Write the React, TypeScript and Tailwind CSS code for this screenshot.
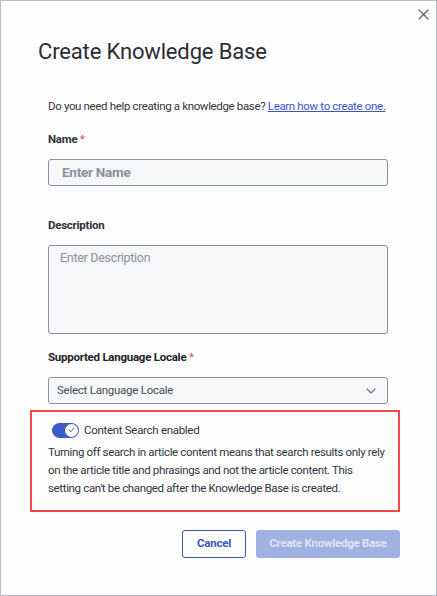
import React from "react";

export default function App() {
  const font = { fontFamily: "Roboto, 'Noto Sans', sans-serif" };
  return (
    <div
      style={font}
      className="relative w-[437px] h-[596px] bg-[#fdfdfd] border border-[#b7bbcb] text-[#2e3139] overflow-hidden"
    >
      <button className="absolute right-[7px] top-[7px] w-[12px] h-[12px] flex items-center justify-center">
        <svg width="11" height="11" viewBox="0 0 11 11" fill="none" stroke="#5f636b" strokeWidth="1.3" strokeLinecap="round">
          <path d="M1 1 L10 10 M10 1 L1 10" />
        </svg>
      </button>

      <div className="flex flex-col pl-[47px] pr-[48px]">
        <h1 className="mt-[37px] -ml-[10px] text-[22px] leading-[28px] tracking-[-0.15px] font-normal text-[#2a2d35]">
          Create Knowledge Base
        </h1>

        <p className="mt-[32px] text-[11.5px] leading-[16px] tracking-[-0.35px] text-[#33363d] whitespace-nowrap">
          Do you need help creating a knowledge base?{" "}
          <a className="text-[#3b56c6] underline">Learn how to create one.</a>
        </p>

        <label className="mt-[17px] text-[11.5px] leading-[16px] tracking-[-0.25px] font-bold text-[#2e3139]">
          Name <span className="text-[#e5484d] font-normal">*</span>
        </label>
        <div className="mt-[12px] h-[27px] rounded-[3px] border border-[#8a8f99] bg-[#f6f7f9] flex items-center pl-[13px] text-[13.5px] tracking-[-0.25px] font-bold text-[#8c9098]">
          Enter Name
        </div>

        <label className="mt-[31px] text-[11.5px] leading-[16px] tracking-[-0.25px] font-bold text-[#2e3139]">
          Description
        </label>
        <div className="mt-[12px] h-[89px] rounded-[3px] border border-[#8a8f99] bg-[#f6f7f9] pl-[11px] pt-[3px] text-[12.5px] leading-[18px] tracking-[-0.3px] text-[#8c9098]">
          Enter Description
        </div>

        <label className="mt-[15px] text-[11.5px] leading-[16px] tracking-[-0.25px] font-bold text-[#1f2228]">
          Supported Language Locale <span className="text-[#e5484d] font-normal">*</span>
        </label>
        <div className="mt-[12px] h-[27px] rounded-[3px] border border-[#8a8f99] bg-[#f6f7f9] flex items-center justify-between pl-[8px] pr-[11px] text-[11.5px] tracking-[-0.25px] text-[#4a4e56]">
          <span>Select Language Locale</span>
          <svg width="10" height="6" viewBox="0 0 10 6" fill="none" stroke="#6a6e76" strokeWidth="1.1" strokeLinecap="round" strokeLinejoin="round">
            <path d="M1 1 L5 5 L9 1" />
          </svg>
        </div>

        <div className="mt-[6px] -ml-[18px] -mr-[12px] border-2 border-[#f1464b] pl-[16px] pr-[6px] pt-[10px] pb-[13px]">
          <div className="flex items-center h-[16px]">
            <div className="ml-[4px] w-[27px] h-[15px] rounded-full bg-[#3b5bc6] flex items-center justify-end pr-[1px]">
              <div className="w-[13px] h-[13px] rounded-full bg-white flex items-center justify-center">
                <svg width="7" height="6" viewBox="0 0 7 6" fill="none" stroke="#3b5bc6" strokeWidth="1" strokeLinecap="round" strokeLinejoin="round">
                  <path d="M1 3 L2.8 4.8 L6 1.2" />
                </svg>
              </div>
            </div>
            <span className="ml-[5px] text-[11.5px] leading-[16px] tracking-[-0.3px] text-[#33363d]">Content Search enabled</span>
          </div>
          <p className="mt-[5px] text-[11.5px] leading-[18px] tracking-[-0.35px] text-[#33363d]">
            Turning off search in article content means that search results only rely on the article title and phrasings and not the article content. This
            <br />
            setting can't be changed after the Knowledge Base is created.
          </p>
        </div>

        <div className="mt-[18px] flex justify-end gap-[10px] -mr-[12px]">
          <button className="w-[64px] h-[28px] rounded-[3px] border border-[#3b56c6] text-[11.5px] tracking-[-0.25px] font-bold text-[#3b56c6] bg-white">
            Cancel
          </button>
          <button className="w-[144px] h-[28px] rounded-[3px] bg-[#a0b1e4] text-[11.5px] tracking-[-0.25px] font-bold text-[#dfe5f6]">
            Create Knowledge Base
          </button>
        </div>
      </div>
    </div>
  );
}
